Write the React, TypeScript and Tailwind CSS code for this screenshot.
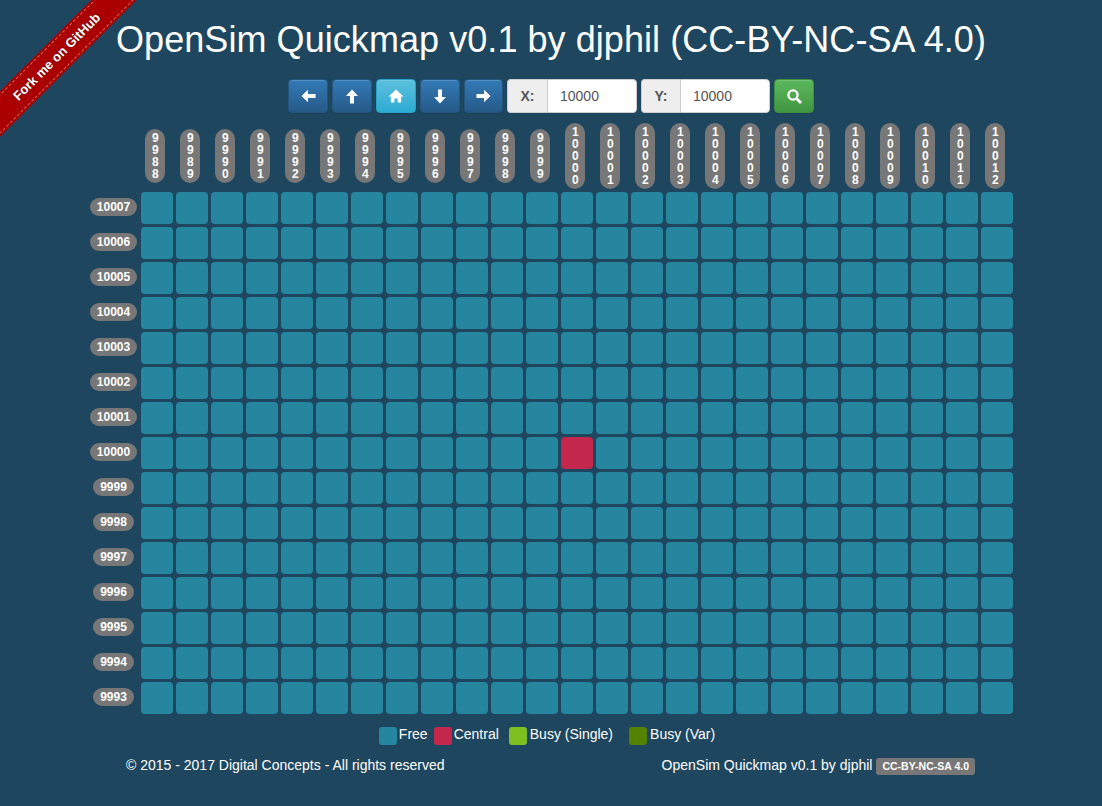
import React from "react";

const xLabels = Array.from({ length: 25 }, (_, i) => 9988 + i);
const yLabels = Array.from({ length: 15 }, (_, i) => 10007 - i);

const badge = "rounded-[10px] bg-[#777] text-white font-bold text-[12px] leading-[12px] text-center py-[3px]";
const btn =
  "flex items-center justify-center h-[34px] rounded border shadow-[inset_0_1px_0_rgba(255,255,255,0.15),0_1px_1px_rgba(0,0,0,0.075)]";
const primary = "bg-linear-to-b from-[#337ab7] to-[#265a88] border-[#245580]";

const ArrowLeft = () => (
  <svg width="15" height="14" viewBox="0 0 15 14" fill="white">
    <path d="M0.5 7 L7 0.8 V5 H14.5 V9 H7 V13.2 Z" />
  </svg>
);
const ArrowRight = () => (
  <svg width="15" height="14" viewBox="0 0 15 14" fill="white">
    <path d="M14.5 7 L8 0.8 V5 H0.5 V9 H8 V13.2 Z" />
  </svg>
);
const ArrowUp = () => (
  <svg width="14" height="15" viewBox="0 0 14 15" fill="white">
    <path d="M7 0.5 L13 7 H9 V14.5 H5 V7 H1 Z" />
  </svg>
);
const ArrowDown = () => (
  <svg width="14" height="15" viewBox="0 0 14 15" fill="white">
    <path d="M7 14.5 L13 8 H9 V0.5 H5 V8 H1 Z" />
  </svg>
);
const Home = () => (
  <svg width="16" height="14" viewBox="0 0 16 14" fill="white">
    <path d="M8 0.5 L15.5 7.5 H13.2 V13.5 H9.6 V9.5 H6.4 V13.5 H2.8 V7.5 H0.5 Z" />
  </svg>
);
const Search = () => (
  <svg width="15" height="15" viewBox="0 0 15 15" fill="none" stroke="white">
    <circle cx="6" cy="6" r="4.6" strokeWidth="2.3" />
    <path d="M9.5 9.5 L14 14" strokeWidth="2.8" />
  </svg>
);

const Swatch = ({ color }: { color: string }) => <span className={`w-[18px] h-[18px] rounded-[3px] mt-[3px] ${color}`} />;

export default function App() {
  return (
    <div className="relative h-screen overflow-hidden bg-[#1e465e] text-white font-['Liberation_Sans',Arial,sans-serif] text-[14px]">
      <a className="absolute left-[-43px] top-[41px] w-[200px] h-[32px] -rotate-45 bg-[#a00] flex items-center justify-center">
        <span className="w-full text-center border-y border-dashed border-white/40 leading-[26px] text-[13px] font-bold text-white [text-shadow:0_0_2px_rgba(0,0,0,0.5)]">
          Fork me on GitHub
        </span>
      </a>

      <h1 className="pt-5 pb-[19px] text-[36px] leading-[40px] text-center tracking-[0.06px]">OpenSim Quickmap v0.1 by djphil (CC-BY-NC-SA 4.0)</h1>

      <div className="flex justify-center gap-1">
        <button className={`${btn} w-10 ${primary}`}><ArrowLeft /></button>
        <button className={`${btn} w-10 ${primary}`}><ArrowUp /></button>
        <button className={`${btn} w-10 bg-linear-to-b from-[#5bc0de] to-[#2aabd2] border-[#28a4c9]`}><Home /></button>
        <button className={`${btn} w-10 ${primary}`}><ArrowDown /></button>
        <button className={`${btn} w-[39px] ${primary}`}><ArrowRight /></button>
        <div className="flex w-[130px] h-[34px]">
          <span className="w-10 flex items-center justify-center rounded-l border border-r-0 border-[#ccc] bg-[#eee] text-[#555] font-bold">X:</span>
          <input readOnly value="10000" className="min-w-0 flex-1 rounded-r border border-[#ccc] bg-white px-3 text-[#555]" />
        </div>
        <div className="flex w-[129px] h-[34px]">
          <span className="w-[39px] flex items-center justify-center rounded-l border border-r-0 border-[#ccc] bg-[#eee] text-[#555] font-bold">Y:</span>
          <input readOnly value="10000" className="min-w-0 flex-1 rounded-r border border-[#ccc] bg-white px-3 text-[#555]" />
        </div>
        <button className={`${btn} w-10 bg-linear-to-b from-[#5cb85c] to-[#419641] border-[#3e8f3e]`}><Search /></button>
      </div>

      <div className="mt-[10px] ml-[89px] grid grid-cols-[49px_repeat(25,32px)] gap-[3px] items-center">
        <div />
        {xLabels.map((x) => (
          <div key={x} className="flex pl-1">
            <span className={`${badge} w-5 px-[7px] break-all`}>{x}</span>
          </div>
        ))}
        {yLabels.map((y) => (
          <React.Fragment key={y}>
            <div className="flex justify-center mb-[2px]">
              <span className={`${badge} px-[7px]`}>{y}</span>
            </div>
            {xLabels.map((x) => (
              <div key={x} className={`h-8 rounded-[4px] ${x === 10000 && y === 10000 ? "bg-[#c3284c]" : "bg-[#26869f]"}`} />
            ))}
          </React.Fragment>
        ))}
      </div>

      <div className="mt-[10px] flex justify-center leading-[20px] pr-[8px]">
        <Swatch color="bg-[#26869f]" />
        <span className="ml-[2px] mr-[6px]">Free</span>
        <Swatch color="bg-[#c3284c]" />
        <span className="ml-[2px] mr-[10px]">Central</span>
        <Swatch color="bg-[#7dc020]" />
        <span className="ml-[3px] mr-[16px]">Busy (Single)</span>
        <Swatch color="bg-[#548300]" />
        <span className="ml-[3px]">Busy (Var)</span>
      </div>

      <div className="mt-[10px] flex justify-between pl-[126px] pr-[127px] leading-[20px]">
        <span>© 2015 - 2017 Digital Concepts - All rights reserved</span>
        <span className="flex items-center">
          OpenSim Quickmap v0.1 by djphil
          <span className="ml-[4px] mt-[2px] rounded-[3px] bg-[#777] px-[6px] pt-[2px] pb-[3px] text-[10.5px] leading-[12px] font-bold">CC-BY-NC-SA 4.0</span>
        </span>
      </div>
    </div>
  );
}
